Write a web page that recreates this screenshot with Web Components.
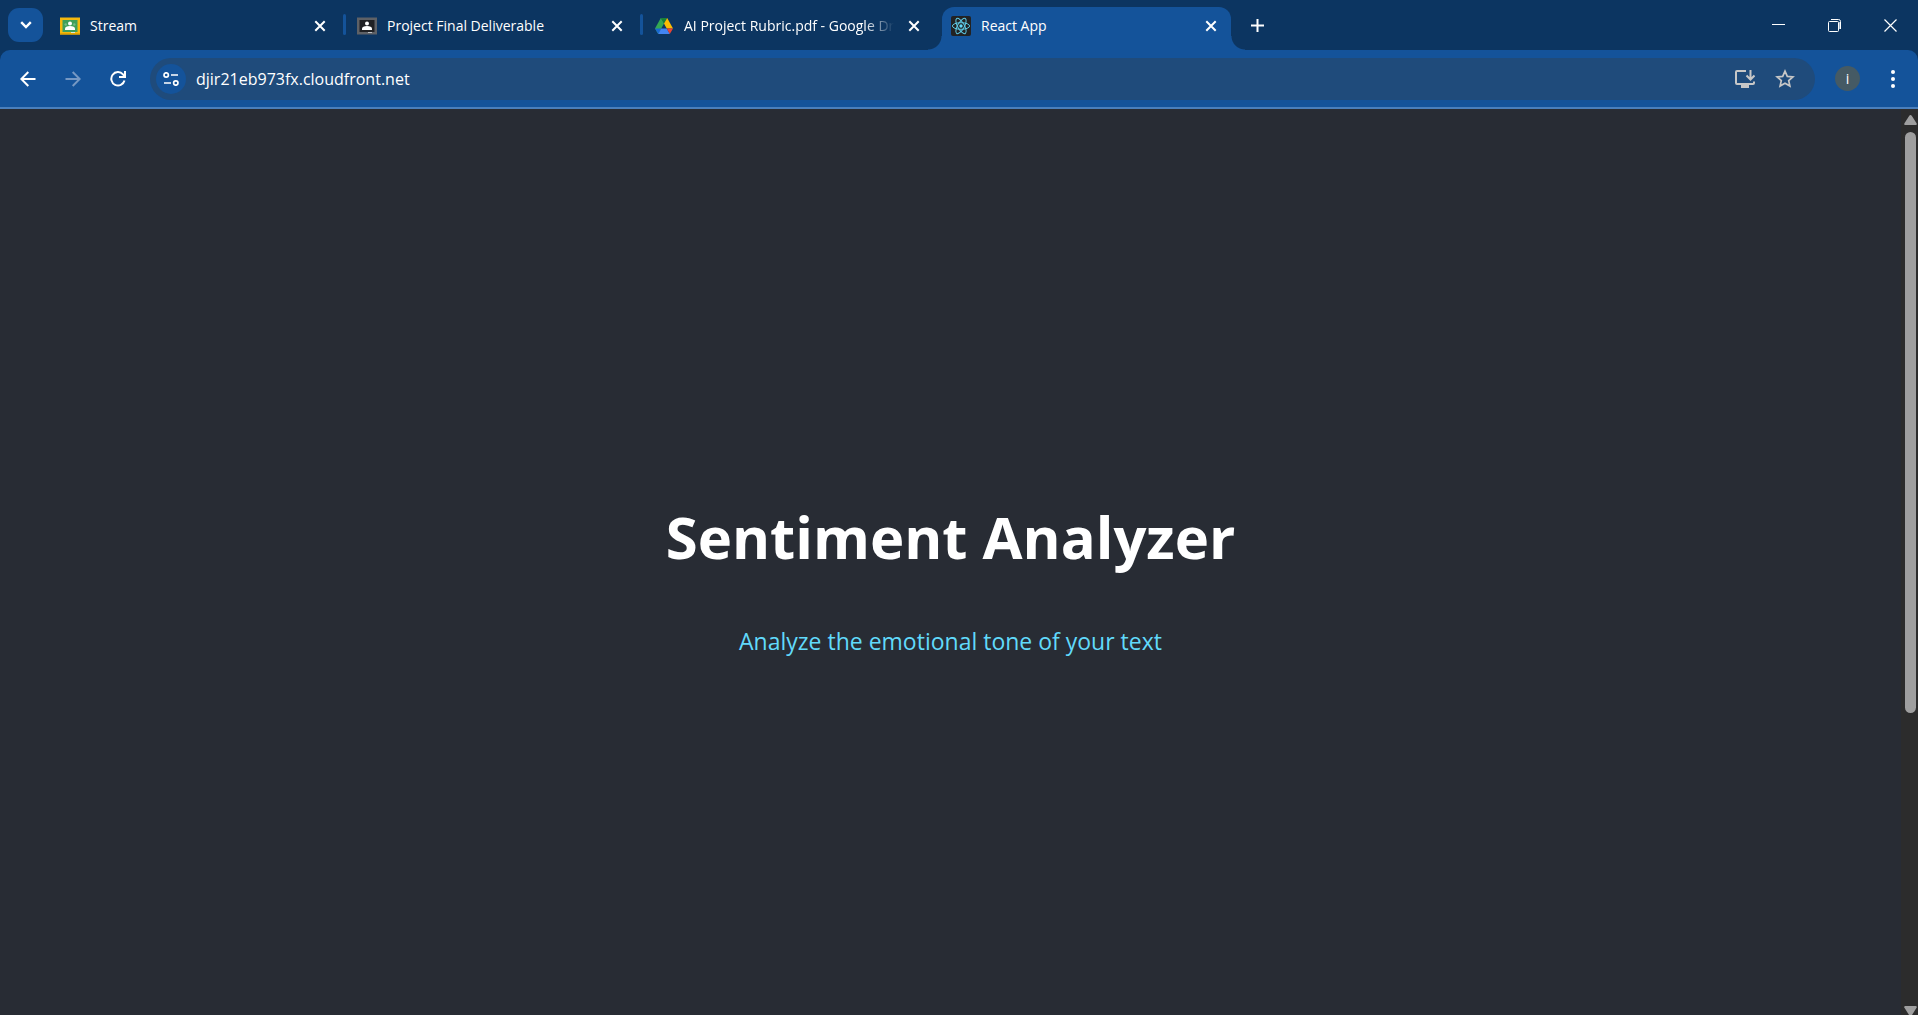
<!DOCTYPE html>
<html lang="en">
<head>
<meta charset="utf-8">
<title>React App</title>
<style>
html, body { margin: 0; height: 100%; overflow: hidden; }
body {
  --strip: #0c3561;
  --bar: #14539a;
  --field: #1f4b7b;
  --page: #282c34;
  font-family: "Open Sans", "Noto Sans", sans-serif;
  color: #fff;
  background: var(--page);
}
</style>
</head>
<body>
<browser-window></browser-window>
<script>
const RESET = `
  *, *::before, *::after { box-sizing: border-box; }
  button { all: unset; box-sizing: border-box; display: flex; align-items: center; justify-content: center; cursor: pointer; }
  svg { display: block; flex: none; }
`;
const define = (name, html, setup) => customElements.define(name, class extends HTMLElement {
  constructor() {
    super();
    this.attachShadow({ mode: 'open' }).innerHTML = `<style>${RESET}</style>` + html;
  }
  connectedCallback() { if (setup) setup(this, this.shadowRoot); }
});

define('browser-tab', `
<style>
  :host { display: flex; position: relative; width: 289px; height: 43px; min-width: 0; padding: 0 10px 6px 9px; align-items: center; gap: 8px; border-radius: 12px 12px 0 0; }
  .tab { flex: 1; min-width: 0; justify-content: flex-start; gap: 10px; }
  .title { flex: 1; min-width: 0; overflow: hidden; white-space: nowrap; font-size: 14px; line-height: 20px; }
  :host([long]) .title { -webkit-mask-image: linear-gradient(to right, #000 calc(100% - 32px), transparent calc(100% - 2px)); mask-image: linear-gradient(to right, #000 calc(100% - 32px), transparent calc(100% - 2px)); }
  .close { width: 20px; height: 20px; }
  :host([active]) { background: var(--bar); }
  :host([active])::before, :host([active])::after { content: ""; position: absolute; bottom: 0; width: 14px; height: 14px; }
  :host([active])::before { right: 100%; background: radial-gradient(circle at 0 0, transparent 13px, var(--bar) 14px); }
  :host([active])::after { left: 100%; background: radial-gradient(circle at 100% 0, transparent 13px, var(--bar) 14px); }
</style>
<button class="tab" role="tab"><slot name="icon"></slot><span class="title"><slot></slot></span></button>
<button class="close" aria-label="Close tab"><svg width="12" height="12" viewBox="0 0 12 12" stroke="#fff" stroke-width="2"><path d="M1.3 1.3l9.4 9.4M10.7 1.3l-9.4 9.4"/></svg></button>`,
(el, root) => root.querySelector('.tab').setAttribute('aria-selected', el.hasAttribute('active')));

define('tab-strip', `
<style>
  :host { display: flex; height: 50px; background: var(--strip); padding: 7px 0 0 8px; justify-content: space-between; }
  .left { display: flex; }
  .search { width: 35px; height: 34px; margin: 1px 8px 0 0; border-radius: 11px; background: var(--bar); }
  .sep { width: 3px; height: 21px; margin: 7px 2px 0 3px; border-radius: 2px; background: var(--bar); }
  .gap { width: 8px; }
  .new { width: 34px; height: 34px; margin-left: 9px; margin-top: 1px; }
  .win { display: flex; height: 36px; }
  .win button { width: 56px; }
  svg.fav { width: 20px; height: 20px; }
</style>
<div class="left" role="tablist">
  <button class="search" aria-label="Search tabs"><svg width="12" height="8" viewBox="0 0 12 8" fill="none" stroke="#fff" stroke-width="2.4"><path d="M1.2 1.2L6 6l4.800-4.800"/></svg></button>
  <browser-tab>Stream<svg slot="icon" class="fav" viewBox="0 0 20 20"><path fill="#f5b90f" d="M0 1.500h20v17H0z"/><path fill="#e3a400" d="M0 17h20v1.500H0z"/><path fill="#3f9f5a" d="M2.500 4h15v12h-15z"/><circle cx="10" cy="7.500" r="2" fill="#fff"/><circle cx="5.700" cy="8.500" r="1.200" fill="#76bb88"/><circle cx="14.300" cy="8.500" r="1.200" fill="#76bb88"/><path fill="#fff" d="M5 14v-1.500c0-1.500 2-2.500 5-2.500s5 1 5 2.500V14z"/><path fill="#d5eadb" d="M11 16h4v1h-4z"/></svg></browser-tab>
  <span class="sep"></span>
  <browser-tab>Project Final Deliverable<svg slot="icon" class="fav" viewBox="0 0 20 20"><path fill="#5e6166" d="M0 1.500h20v17H0z"/><path fill="#202124" d="M2.500 4h15v12h-15z"/><circle cx="10" cy="7.500" r="2" fill="#fff"/><path fill="#fff" d="M5 14v-1.500c0-1.500 2-2.500 5-2.500s5 1 5 2.500V14z"/><path fill="#bdc1c6" d="M11 16h4v1h-4z"/></svg></browser-tab>
  <span class="sep"></span>
  <browser-tab long>AI Project Rubric.pdf - Google Drive<svg slot="icon" class="fav" viewBox="0 0 20 20"><path fill="#188038" d="M6.800 2h6.400L10 7.600z"/><path fill="#34a853" d="M6.800 2L10 7.600 4.200 18 1 12.500z"/><path fill="#fbbc04" d="M13.200 2L19 12.500h-6.300L10 7.600z"/><path fill="#1967d2" d="M1 12.500h6.200L4.200 18z"/><path fill="#4285f4" d="M7.200 12.500h5.500L15.800 18H4.200z"/><path fill="#ea4335" d="M12.700 12.500H19L15.800 18z"/></svg></browser-tab>
  <span class="gap"></span>
  <browser-tab active>React App<svg slot="icon" class="fav" viewBox="0 0 20 20"><rect width="20" height="20" rx="2" fill="#222"/><g fill="none" stroke="#5ec9e4" stroke-width="1"><ellipse cx="10" cy="10" rx="8.600" ry="3.300"/><ellipse cx="10" cy="10" rx="8.600" ry="3.300" transform="rotate(60 10 10)"/><ellipse cx="10" cy="10" rx="8.600" ry="3.300" transform="rotate(120 10 10)"/></g><circle cx="10" cy="10" r="1.700" fill="#61dafb"/></svg></browser-tab>
  <button class="new" aria-label="New tab"><svg width="13" height="13" viewBox="0 0 13 13" stroke="#fff" stroke-width="2"><path d="M6.500 0v13M0 6.500h13"/></svg></button>
</div>
<div class="win">
  <button aria-label="Minimize"><svg width="13" height="13" viewBox="0 0 13 13"><path fill="#fff" d="M0 5h13v1H0z"/></svg></button>
  <button aria-label="Restore"><svg width="13" height="13" viewBox="0 0 13 13" fill="none" stroke="#fff"><path stroke="#9db1c7" d="M11.500 3v7"/><path d="M.5 3.500a1 1 0 0 1 1-1h8a1 1 0 0 1 1 1v8a1 1 0 0 1-1 1h-8a1 1 0 0 1-1-1zM3 .500h7.500a2 2 0 0 1 2 2V10"/></svg></button>
  <button aria-label="Close"><svg width="13" height="13" viewBox="0 0 13 13" stroke="#fff" stroke-width="1.200"><path d="M.5.500l12 12M12.500.500l-12 12"/></svg></button>
</div>`);

define('address-bar', `
<style>
  :host { display: flex; flex: 1; min-width: 0; height: 42px; align-items: center; border-radius: 21px; background: var(--field); padding: 0 20px 0 6px; }
  .site { width: 30px; height: 30px; border-radius: 50%; background: var(--bar); }
  input { flex: 1; min-width: 0; margin-left: 10px; padding: 0; border: 0; outline: 0; background: none; color: #fff; font: 16px/24px "Open Sans", "Noto Sans", sans-serif; }
  .act { width: 20px; height: 24px; margin-left: 20px; }
</style>
<button class="site" aria-label="View site information"><svg width="16" height="14" viewBox="0 0 16 14" fill="none" stroke="#fff" stroke-width="2"><circle cx="3.200" cy="3" r="2.200" stroke-width="1.700"/><path stroke-width="1.700" d="M8 3h7M1 11h7"/><circle cx="12.800" cy="11" r="2.200" stroke-width="1.700"/></svg></button>
<input type="text" aria-label="Address and search bar" value="djir21eb973fx.cloudfront.net">
<button class="act" aria-label="Install app"><svg width="20" height="18" viewBox="0 0 20 18" fill="none" stroke="#c7c7c7" stroke-width="2"><path d="M11 1H2a1 1 0 0 0-1 1v11a1 1 0 0 0 1 1h16a1 1 0 0 0 1-1v-1.500"/><path d="M15.500 0v9M11.500 5.500l4 4 4-4"/><path fill="#c7c7c7" stroke="none" d="M6 14h8v4H6z"/></svg></button>
<button class="act" aria-label="Bookmark this tab"><svg width="20" height="19" viewBox="0 0 20 19" fill="none" stroke="#c7c7c7" stroke-width="1.700"><path d="M10 2.200l2.300 5.200 5.600.5-4.200 3.700 1.200 5.500-4.900-2.900-4.900 2.900 1.200-5.500L2.100 7.900l5.600-.5z"/></svg></button>`);

define('tool-bar', `
<style>
  :host { display: block; background: var(--strip); }
  .bar { display: flex; align-items: center; height: 59px; padding: 0 8px 0 10px; border-radius: 10px 10px 0 0; background: var(--bar); border-bottom: 2px solid #4a7fbc; }
  .nav { width: 35px; height: 35px; margin-right: 10px; }
  .last { margin-right: 15px; }
  .me { width: 25px; height: 25px; border-radius: 50%; margin: 0 15px 0 20px; background: #455a64; font-size: 14px; line-height: 20px; }
  .menu { width: 35px; height: 35px; }
</style>
<div class="bar">
  <button class="nav" aria-label="Back"><svg width="16" height="16" viewBox="0 0 16 16" fill="none" stroke="#fff" stroke-width="2"><path d="M15.500 8H2M8.300 1L1.300 8l7 7"/></svg></button>
  <button class="nav" aria-label="Forward"><svg width="16" height="16" viewBox="0 0 16 16" fill="none" stroke="#7698c3" stroke-width="2"><path d="M.5 8H14M7.700 1l7 7-7 7"/></svg></button>
  <button class="nav last" aria-label="Reload"><svg width="16" height="16" viewBox="0 0 16 16" fill="none" stroke="#fff" stroke-width="2"><path d="M14.500 9.500A6.700 6.700 0 1 1 13 3.300L14.800 5.500"/><path d="M15 0v6H9"/></svg></button>
  <address-bar></address-bar>
  <button class="me" aria-label="Profile">i</button>
  <button class="menu" aria-label="Menu"><svg width="4" height="18" viewBox="0 0 4 18" fill="#fff"><circle cx="2" cy="2" r="2"/><circle cx="2" cy="9" r="2"/><circle cx="2" cy="16" r="2"/></svg></button>
</div>`);

define('scroll-bar', `
<style>
  :host { display: flex; flex-direction: column; align-items: center; width: 17px; padding: 6px 0 0 2px; background: #2c2c2c; }
  .track { flex: 1; width: 11px; margin: 7px 0; }
  .thumb { width: 11px; height: 67%; border-radius: 6px; background: #9f9f9f; }
</style>
<svg width="13" height="10" viewBox="0 0 13 10"><path fill="#9f9f9f" d="M6.500 0Q7.300 0 7.900 1L12.700 8.500Q13 10 12 10H1Q0 10 .3 8.500L5.100 1Q5.700 0 6.500 0z"/></svg>
<div class="track"><div class="thumb"></div></div>
<svg width="13" height="9" viewBox="0 0 13 9"><path fill="#9f9f9f" d="M1 0h11q1 0 .7 1.500L8 9H5L.3 1.500Q0 0 1 0z"/></svg>`);

define('app-header', `
<style>
  :host { display: flex; flex: 1; min-width: 0; flex-direction: column; align-items: center; justify-content: center; background: var(--page); text-align: center; }
  h1 { margin: 32px 0 42px; font-size: 58px; line-height: 84px; font-weight: 700; }
  p { margin: 0; font-size: 23px; line-height: 40px; color: #61dafb; }
</style>
<h1><slot name="title"></slot></h1>
<p><slot></slot></p>`);

define('browser-window', `
<style>
  :host { display: flex; flex-direction: column; height: 100vh; }
  main { display: flex; flex: 1; min-height: 0; }
</style>
<tab-strip></tab-strip>
<tool-bar></tool-bar>
<main>
  <app-header><span slot="title">Sentiment Analyzer</span>Analyze the emotional tone of your text</app-header>
  <scroll-bar></scroll-bar>
</main>`);
</script>
</body>
</html>
